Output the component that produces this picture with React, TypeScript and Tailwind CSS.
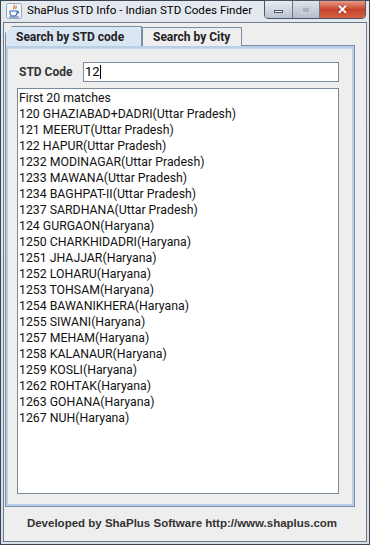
import React from 'react';

const matches = [
  'First 20 matches',
  '120 GHAZIABAD+DADRI(Uttar Pradesh)',
  '121 MEERUT(Uttar Pradesh)',
  '122 HAPUR(Uttar Pradesh)',
  '1232 MODINAGAR(Uttar Pradesh)',
  '1233 MAWANA(Uttar Pradesh)',
  '1234 BAGHPAT-II(Uttar Pradesh)',
  '1237 SARDHANA(Uttar Pradesh)',
  '124 GURGAON(Haryana)',
  '1250 CHARKHIDADRI(Haryana)',
  '1251 JHAJJAR(Haryana)',
  '1252 LOHARU(Haryana)',
  '1253 TOHSAM(Haryana)',
  '1254 BAWANIKHERA(Haryana)',
  '1255 SIWANI(Haryana)',
  '1257 MEHAM(Haryana)',
  '1258 KALANAUR(Haryana)',
  '1259 KOSLI(Haryana)',
  '1262 ROHTAK(Haryana)',
  '1263 GOHANA(Haryana)',
  '1267 NUH(Haryana)',
];

function JavaIcon() {
  return (
    <svg width="16" height="16" viewBox="0 0 16 16">
      <rect x="0.5" y="0.5" width="15" height="15" rx="2" fill="#f3f6fa" stroke="#9aa8b8" />
      <path d="M8 2c1.5 1.5-1.5 2.5 0 4M10 3c1 1-1 2 0 3" stroke="#e2661d" strokeWidth="1.2" fill="none" />
      <path d="M4 8h7v2.5a3 3 0 0 1-3 2.5h-1a3 3 0 0 1-3-2.5z" fill="none" stroke="#3b6cb4" strokeWidth="1.1" />
      <path d="M11 8.5h1.5v1.5h-1.5" fill="none" stroke="#3b6cb4" strokeWidth="1" />
      <path d="M3 14h10" stroke="#3b6cb4" strokeWidth="1" />
    </svg>
  );
}

const listFont = { fontFamily: 'Roboto, "Liberation Sans", sans-serif' };

export default function App() {
  return (
    <div
      className="w-[370px] h-[545px] bg-[#3c4652] p-px text-black"
      style={{ fontFamily: '"Liberation Sans", Arial, sans-serif' }}
    >
      <div className="w-full h-full flex flex-col bg-gradient-to-b from-[#e4e9ef] to-[#d6dde6] px-[2px] pb-[2px]">
        {/* title bar */}
        <div className="h-[21px] flex items-start relative">
          <div className="flex items-center h-[18px] mt-[1px] ml-[3px] gap-[5px]">
            <JavaIcon />
            <span
              className="text-[11.6px] text-black leading-none"
              style={{ fontFamily: 'Roboto, "Open Sans", sans-serif' }}
            >
              ShaPlus STD Info - Indian STD Codes Finder
            </span>
          </div>
          <div className="absolute right-[1px] top-[-1px] flex h-[19px] border border-[#4a5563] rounded-b-[4px] overflow-hidden">
            <div className="w-[28px] bg-gradient-to-b from-[#e8ecf1] to-[#b9c4d1] border-r border-[#6b7583] flex items-center justify-center">
              <div className="w-[9px] h-[3px] bg-white border border-[#4a5563] mt-[4px]" />
            </div>
            <div className="w-[27px] bg-gradient-to-b from-[#dfe4ea] to-[#b4bec9] border-r border-[#6b7583] flex items-center justify-center">
              <div className="w-[10px] h-[8px] border-2 border-[#c9d0d8] bg-[#aab3bd]" />
            </div>
            <div className="w-[45px] bg-gradient-to-b from-[#e79a87] via-[#c8422d] to-[#d4623f] flex items-center justify-center">
              <span className="text-white font-bold text-[13px] leading-none" style={{ textShadow: '0 0 2px #6b1a0e' }}>
                ✕
              </span>
            </div>
          </div>
        </div>

        {/* client area */}
        <div className="flex-1 flex flex-col bg-[#eeeeee] border border-[#6d7a89] text-[12px]">
          <div className="flex flex-col pl-[1px] pr-[11px] pt-[3px]">
            {/* tabs */}
            <div className="flex items-end h-[20px] relative whitespace-nowrap">
              <div
                className="h-[20px] w-[137px] bg-[#dae6f3] border border-b-0 border-[#7a8ea7] font-bold text-[12px] text-[#222] flex items-center pl-[10px] pt-[1px]"
                style={{ clipPath: 'polygon(7px 0, 100% 0, 100% 100%, 0 100%, 0 7px)', ...listFont }}
              >
                Search by STD code
              </div>
              <div
                className="h-[19px] w-[100px] bg-[#eeeeee] border border-b-0 border-[#7a8ea7] font-bold text-[12px] text-[#222] flex items-center pl-[10px]"
                style={listFont}
              >
                Search by City
              </div>
            </div>
            {/* panel */}
            <div className="h-[462px] border border-[#7a8ea7] bg-[#b8cfe5] p-[2px] -mt-px">
              <div className="h-full bg-[#eeeeee] border-t border-[#c8d7e8] flex flex-col pl-[9px] pr-[13px]">
                <div className="flex items-center mt-[13px] h-[20px]">
                  <span className="font-bold w-[66px] pl-[2px] text-[#333]" style={listFont}>
                    STD Code
                  </span>
                  <div className="flex-1 h-[20px] bg-white border border-[#7a8a99] flex items-center pl-[1px]">
                    <span className="text-[13px]" style={listFont}>12</span>
                    <span className="w-px h-[14px] bg-black" />
                  </div>
                </div>
                <div className="mt-[6px] h-[406px] bg-white border border-[#7a8a99] pl-px pt-px" style={listFont}>
                  {matches.map((m) => (
                    <div key={m} className="h-[16px] leading-[16px] text-[12.3px] text-[#111] whitespace-nowrap">
                      {m}
                    </div>
                  ))}
                </div>
              </div>
            </div>
          </div>
          <div className="flex-1 flex items-center justify-center pr-[6px]">
            <span className="font-bold text-[11.5px] text-[#333]">
              Developed by ShaPlus Software http://www.shaplus.com
            </span>
          </div>
        </div>
      </div>
    </div>
  );
}
